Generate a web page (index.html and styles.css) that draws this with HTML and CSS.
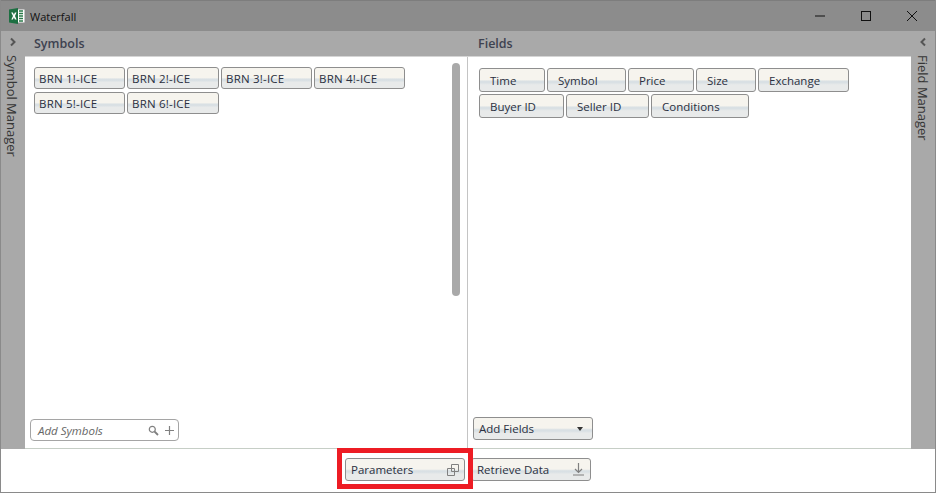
FILE: index.html
```html
<!DOCTYPE html>
<html lang="en">
<head>
<meta charset="utf-8">
<title>Waterfall</title>
<link rel="stylesheet" href="styles.css">
</head>
<body>
<div class="window">
  <header class="titlebar">
    <svg class="xl" width="16" height="16" viewBox="0 0 16 16"><rect x="5" y="1.500" width="10.500" height="13" fill="#fff"/><path d="M10 3h4M10 5.500h4M10 8h4M10 10.500h4M10 13h4" stroke="#2a7a4a" stroke-width="1.300"/><path d="M0 1.500 9 0v16L0 14.500z" fill="#1d6f42"/><path d="M2.200 4.500h1.700l1 2.200 1-2.200h1.600L6 8l1.600 3.500H5.900l-1-2.300-1 2.300H2.300L4 8z" fill="#fff"/></svg>
    <span class="title-text">Waterfall</span>
    <div class="win-controls">
      <svg class="ctl" width="46" height="30" viewBox="0 0 46 30"><path d="M18 15h10" stroke="#111" stroke-width="1"/></svg>
      <svg class="ctl" width="46" height="30" viewBox="0 0 46 30"><rect x="18.500" y="10.500" width="9" height="9" fill="none" stroke="#111"/></svg>
      <svg class="ctl" width="46" height="30" viewBox="0 0 46 30"><path d="M18 10l10 10M28 10L18 20" stroke="#111" stroke-width="1"/></svg>
    </div>
  </header>
  <div class="body">
    <aside class="rail">
      <svg class="chev" width="8" height="10" viewBox="0 0 8 10"><path d="M2 1.500 5.500 5 2 8.500" fill="none" stroke="#555" stroke-width="2"/></svg>
      <span class="rail-label rail-left">Symbol Manager</span>
    </aside>
    <div class="center">
      <div class="heads">
        <div class="head head-sym">Symbols</div>
        <div class="head head-fld">Fields</div>
      </div>
      <div class="panes">
        <section class="pane pane-sym">
          <div class="chips chips-sym">
            <span class="chip sym">BRN 1!-ICE</span>
            <span class="chip sym">BRN 2!-ICE</span>
            <span class="chip sym">BRN 3!-ICE</span>
            <span class="chip sym">BRN 4!-ICE</span>
            <span class="chip sym">BRN 5!-ICE</span>
            <span class="chip sym">BRN 6!-ICE</span>
          </div>
          <div class="scrollbar"></div>
          <div class="search">
            <span class="search-text">Add Symbols</span>
            <svg class="search-ic" width="11" height="11" viewBox="0 0 11 11"><circle cx="4.300" cy="4.300" r="3" fill="none" stroke="#808080" stroke-width="1.200"/><path d="M6.500 6.500 10 10" stroke="#808080" stroke-width="1.800"/></svg>
            <svg class="plus-ic" width="9" height="9" viewBox="0 0 9 9"><path d="M4.500 0v9M0 4.500h9" stroke="#808080" stroke-width="1.200"/></svg>
          </div>
        </section>
        <section class="pane pane-fld">
          <div class="chips chips-fld">
            <span class="chip fld w66">Time</span>
            <span class="chip fld w79">Symbol</span>
            <span class="chip fld w66">Price</span>
            <span class="chip fld w60">Size</span>
            <span class="chip fld w91">Exchange</span>
            <span class="chip fld w85">Buyer ID</span>
            <span class="chip fld w83">Seller ID</span>
            <span class="chip fld w98">Conditions</span>
          </div>
          <div class="chip action add-fields">
            <span>Add Fields</span>
            <svg width="6" height="4" viewBox="0 0 6 4"><path d="M0 0h6L3 4z" fill="#333"/></svg>
          </div>
        </section>
      </div>
    </div>
    <aside class="rail">
      <svg class="chev" width="8" height="10" viewBox="0 0 8 10"><path d="M6 1.500 2.500 5 6 8.500" fill="none" stroke="#555" stroke-width="2"/></svg>
      <span class="rail-label">Field Manager</span>
    </aside>
  </div>
  <footer class="footer">
    <div class="chip action bottom-btn">
      <span>Parameters</span>
      <svg width="12" height="12" viewBox="0 0 12 12"><path d="M4.500.5h7v7h-7zM.5 4.500h7v7h-7z" fill="none" stroke="#808080"/></svg>
    </div>
    <div class="chip action bottom-btn">
      <span>Retrieve Data</span>
      <svg width="13" height="13" viewBox="0 0 13 13"><path d="M6.500 0v9M3 6l3.500 3.500L10 6" fill="none" stroke="#808080" stroke-width="1.200"/><path d="M1 12h11" stroke="#a0a0a0" stroke-width="1.500"/></svg>
    </div>
    <div class="highlight"></div>
  </footer>
</div>
</body>
</html>
```
FILE: styles.css
```css
* { box-sizing: border-box; }
html, body { margin: 0; padding: 0; }
body {
  width: 936px;
  height: 493px;
  overflow: hidden;
  font-family: "Open Sans", "Noto Sans", sans-serif;
  font-size: 11px;
  color: #333;
  background: #fff;
}
.window {
  width: 936px;
  height: 493px;
  display: flex;
  flex-direction: column;
  border: 1px solid #8a8a8a;
  border-top: 0;
  position: relative;
}
.titlebar {
  height: 31px;
  flex: none;
  background: #8c8c8c;
  border-top: 1px solid #7d7d7d;
  display: flex;
  align-items: center;
  padding-left: 8px;
}
.xl { flex: none; }
.title-text {
  margin-left: 5px;
  font-family: "Open Sans", sans-serif;
  font-size: 11px;
  color: #111;
}
.win-controls { margin-left: auto; display: flex; }
.ctl { display: block; }
.body { display: flex; height: 418px; flex: none; }
.rail {
  width: 24px;
  flex: none;
  background: #a9a9a9;
  display: flex;
  flex-direction: column;
  align-items: center;
  padding-top: 6px;
}
.chev { flex: none; }
.rail-label {
  margin-top: 8px;
  writing-mode: vertical-rl;
  font-size: 13px;
  font-weight: 500;
  color: #363636;
}
.rail-left { margin-right: 3px; }
.center { flex: 1; display: flex; flex-direction: column; min-width: 0; }
.heads {
  height: 25px;
  flex: none;
  background: #a9a9a9;
  display: flex;
  align-items: center;
  font-size: 12.500px;
  font-weight: 600;
  color: #3e4250;
}
.head-sym { width: 443px; padding-left: 9px; }
.head-fld { padding-left: 10px; }
.panes {
  flex: 1;
  display: flex;
  background: #fff;
  border-top: 1px solid #d5d5d5;
  border-bottom: 1px solid #c6cec6;
}
.pane { position: relative; }
.pane-sym { width: 443px; border-right: 1px solid #c4c4c4; padding: 10px 0 0 9px; }
.pane-fld { flex: 1; padding: 11px 0 0 11px; }
.chips { display: flex; flex-wrap: wrap; align-content: flex-start; }
.chips-sym { gap: 3px 2px; width: 380px; }
.chips-fld { gap: 2px; width: 380px; }
.chip {
  display: inline-flex;
  align-items: center;
  border: 1px solid #8e8e8e;
  border-radius: 3px;
  background: linear-gradient(to bottom, #f6f4ee 0, #f6f4ee 48%, #d9e0e4 56%, #d9e0e4 62%, #e8eaea 72%, #e8eaea 100%);
  color: #2b3040;
  font-size: 11.500px;
  font-weight: 500;
  white-space: nowrap;
}
.sym { width: 91px; height: 22px; padding-left: 4px; letter-spacing: 0.2px; }
.sym:nth-child(2), .sym:nth-child(6) { width: 92px; }
.fld { height: 24px; padding-left: 10px; }
.w66 { width: 66px; }
.w79 { width: 79px; }
.w60 { width: 60px; }
.w91 { width: 91px; }
.w85 { width: 85px; }
.w83 { width: 83px; }
.w98 { width: 98px; }
.scrollbar {
  position: absolute;
  left: 427px;
  top: 6px;
  width: 8px;
  height: 233px;
  border-radius: 4px;
  background: #a9a9a9;
}
.search {
  position: absolute;
  left: 5px;
  bottom: 7px;
  width: 149px;
  height: 22px;
  border: 1px solid #a5a5a5;
  border-radius: 4px;
  background: #fff;
  display: flex;
  align-items: center;
  padding: 0 4px 0 7px;
}
.search-text { font-style: italic; color: #666; font-size: 11.500px; flex: 1; }
.search-ic { margin-right: 6px; }
.action { justify-content: space-between; }
.add-fields {
  position: absolute;
  left: 5px;
  bottom: 8px;
  width: 120px;
  height: 23px;
  padding: 0 9px 0 5px;
}
.footer {
  flex: 1;
  display: flex;
  background: #fff;
  padding: 9px 0 0 344px;
  gap: 6px;
  position: relative;
}
.bottom-btn {
  width: 120px;
  height: 23px;
  padding: 0 5px 0 5px;
}
.highlight {
  position: absolute;
  left: 336px;
  top: -1px;
  width: 136px;
  height: 41px;
  border: 5px solid #ed1c24;
  pointer-events: none;
}
```
